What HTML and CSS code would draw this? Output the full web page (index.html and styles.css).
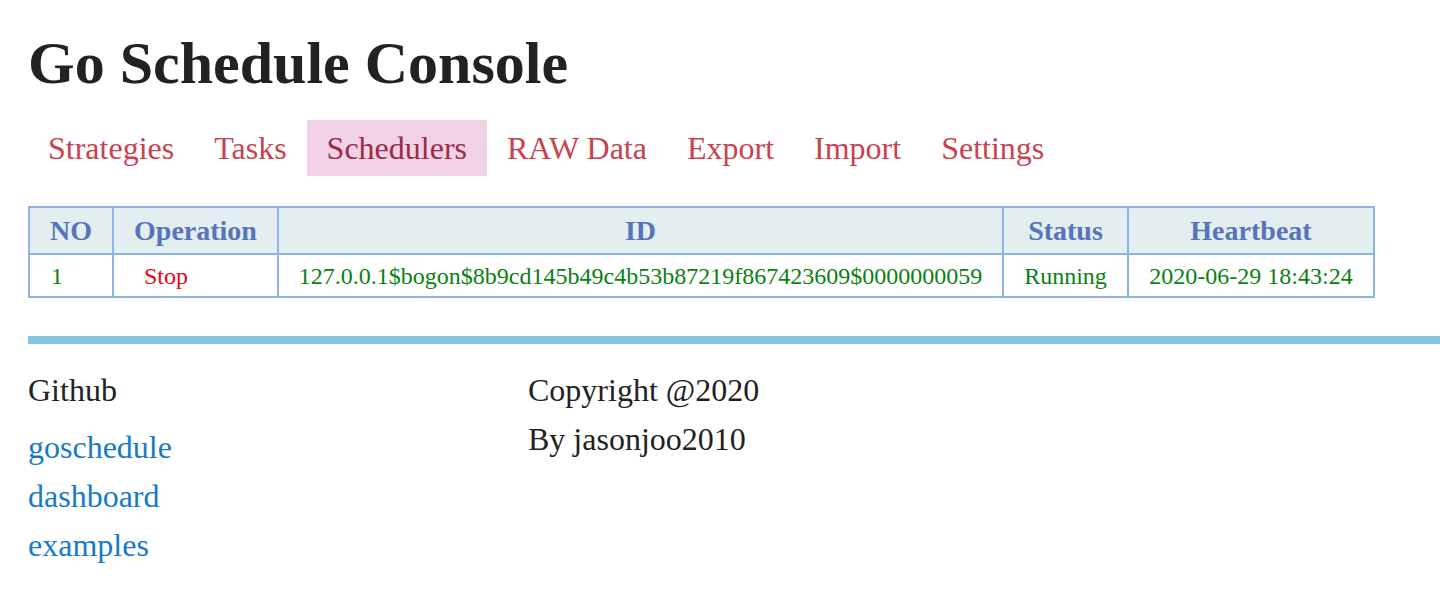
FILE: index.html
```html
<!DOCTYPE html>
<html>
<head>
<meta charset="utf-8">
<link rel="stylesheet" href="styles.css">
</head>
<body>
<div class="page">
  <h1 class="title">Go Schedule Console</h1>
  <nav class="nav">
    <a class="nav-item">Strategies</a>
    <a class="nav-item">Tasks</a>
    <a class="nav-item active">Schedulers</a>
    <a class="nav-item">RAW Data</a>
    <a class="nav-item">Export</a>
    <a class="nav-item">Import</a>
    <a class="nav-item">Settings</a>
  </nav>
  <table class="grid">
    <thead>
      <tr>
        <th class="c-no">NO</th>
        <th class="c-op">Operation</th>
        <th class="c-id">ID</th>
        <th class="c-st">Status</th>
        <th class="c-hb">Heartbeat</th>
      </tr>
    </thead>
    <tbody>
      <tr>
        <td class="left">1</td>
        <td class="op"><a class="stop">Stop</a></td>
        <td>127.0.0.1$bogon$8b9cd145b49c4b53b87219f867423609$0000000059</td>
        <td>Running</td>
        <td>2020-06-29 18:43:24</td>
      </tr>
    </tbody>
  </table>
  <div class="rule"></div>
  <footer class="footer">
    <div class="fcol links">
      <div class="fhead">Github</div>
      <a class="flink">goschedule</a>
      <a class="flink">dashboard</a>
      <a class="flink">examples</a>
    </div>
    <div class="fcol">
      <div class="fline">Copyright @2020</div>
      <div class="fline">By jasonjoo2010</div>
    </div>
  </footer>
</div>
</body>
</html>
```

FILE: styles.css
```css
html, body {
  margin: 0;
  padding: 0;
  background: #fff;
  overflow: hidden;
}
body {
  font-family: "Liberation Serif", "Times New Roman", serif;
  color: #222;
}
.page {
  padding: 0 0 0 28px;
}
.title {
  margin: 0;
  padding-top: 33px;
  font-size: 60px;
  line-height: 60px;
  font-weight: bold;
  color: #222;
}
.nav {
  display: flex;
  margin-top: 27px;
}
.nav-item {
  display: block;
  padding: 0 20px;
  height: 56px;
  line-height: 56px;
  font-size: 32px;
  color: #c9424f;
}
.nav-item.active {
  background: #f2d2e6;
  color: #9b2b46;
}
.grid {
  margin-top: 30px;
  border-collapse: collapse;
  width: 1346px;
  table-layout: fixed;
  border: 2px solid #8fb3e3;
}
.grid th, .grid td {
  border: 2px solid #8fb3e3;
  padding: 0;
  text-align: center;
  white-space: nowrap;
}
.grid th {
  height: 45px;
  background: #e3eef1;
  color: #5674ba;
  font-size: 28px;
  line-height: 45px;
  font-weight: bold;
}
.grid td {
  height: 39px;
  padding-top: 2px;
  line-height: 39px;
  color: #0a7f12;
  font-size: 24px;
}
.grid td.left {
  text-align: left;
  padding-left: 21px;
}
.grid td.op {
  text-align: left;
  padding-left: 30px;
}
.stop {
  color: #f00012;
}
.c-no { width: 82px; }
.c-op { width: 163px; }
.c-id { width: 723px; }
.c-st { width: 123px; }
.c-hb { width: 244px; }
.rule {
  margin-top: 38px;
  height: 8px;
  background: #86c3e3;
}
.footer {
  display: flex;
  padding-top: 22px;
}
.fcol {
  display: flex;
  flex-direction: column;
}
.links {
  width: 500px;
}
.fhead {
  font-size: 32px;
  line-height: 49px;
  margin-bottom: 8px;
}
.flink {
  font-size: 32px;
  line-height: 49px;
  color: #157bc8;
}
.fline {
  font-size: 32px;
  line-height: 49px;
}
```
